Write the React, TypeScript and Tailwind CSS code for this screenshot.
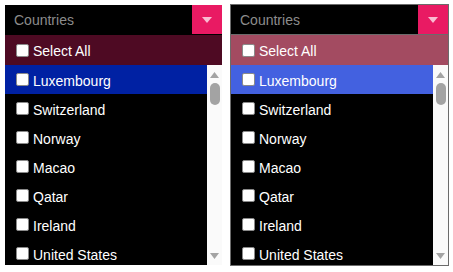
const countries = [
  "Luxembourg",
  "Switzerland",
  "Norway",
  "Macao",
  "Qatar",
  "Ireland",
  "United States",
];

type Theme = {
  frame: string;
  headLine: string;
  selectAll: string;
  active: string;
};

const dark: Theme = {
  frame: "mt-[5px] w-[217px]",
  headLine: "border-black",
  selectAll: "bg-[#4e0a23]",
  active: "bg-[#0021a3]",
};

const light: Theme = {
  frame: "mt-[4px] ml-[8px] w-[219px] border border-[#6b6b6b]",
  headLine: "border-[#6b6b6b]",
  selectAll: "bg-[#a34b61]",
  active: "bg-[#4361e0]",
};

function Box() {
  return (
    <span className="block w-[13px] h-[13px] shrink-0 rounded-[2px] border border-[#8a8a8a] bg-white" />
  );
}

function Row({ label, className }: { label: string; className?: string }) {
  return (
    <div className={`flex items-center gap-[4px] h-[29px] pl-[11px] ${className ?? ""}`}>
      <Box />
      <span className="text-white text-[14px] leading-none pt-[2px]">{label}</span>
    </div>
  );
}

function Scrollbar() {
  return (
    <div className="w-[15px] shrink-0 bg-[#fafafa] flex flex-col items-center">
      <svg width="9" height="6" viewBox="0 0 9 6" className="mt-[7px]">
        <polygon points="4.5,0 9,6 0,6" fill="#a3a3a3" />
      </svg>
      <div className="mt-[5px] w-[10px] h-[22px] rounded-full bg-[#a3a3a3]" />
      <div className="flex-1" />
      <svg width="9" height="6" viewBox="0 0 9 6" className="mb-[6px]">
        <polygon points="0,0 9,0 4.5,6" fill="#a3a3a3" />
      </svg>
    </div>
  );
}

function Dropdown({ theme }: { theme: Theme }) {
  return (
    <div className={`bg-black shrink-0 ${theme.frame}`}>
      <div className={`flex h-[30px] border-b ${theme.headLine}`}>
        <span className="flex-1 flex items-center pl-[9px] pt-[2px] text-[14px] text-[#8c8c8c]">
          Countries
        </span>
        <button className="w-[30px] h-full bg-[#e91a63] flex items-center justify-center">
          <svg width="10" height="6" viewBox="0 0 10 6">
            <polygon points="0,0 10,0 5,6" fill="#f9bcd2" />
          </svg>
        </button>
      </div>
      <Row label="Select All" className={`h-[30px] ${theme.selectAll}`} />
      <div className="flex h-[200px]">
        <div className="flex-1 overflow-hidden">
          {countries.map((c, i) => (
            <Row key={c} label={c} className={i === 0 ? theme.active : ""} />
          ))}
        </div>
        <Scrollbar />
      </div>
    </div>
  );
}

export default function App() {
  return (
    <div
      className="w-[453px] h-[272px] bg-white flex items-start pl-[5px] overflow-hidden"
      style={{ fontFamily: '"Liberation Sans", Arial, sans-serif' }}
    >
      <Dropdown theme={dark} />
      <Dropdown theme={light} />
    </div>
  );
}
